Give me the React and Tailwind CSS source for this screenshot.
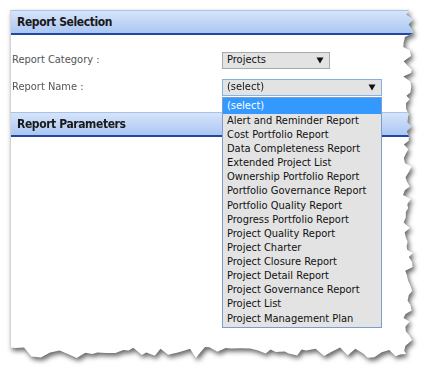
import React from "react";

function rng(seed) {
  let s = seed;
  return () => {
    s = (s * 1103515245 + 12345) % 2147483648;
    return s / 2147483648;
  };
}

function tornPolygon() {
  const r = rng(7);
  const pts = ["0px 0px"];
  let y = 0;
  pts.push("399px 0px");
  while (y < 342) {
    y += 3 + r() * 3;
    const x = 393 + r() * 10;
    pts.push(`${x.toFixed(1)}px ${Math.min(y, 344).toFixed(1)}px`);
  }
  let x = 396;
  while (x > 4) {
    x -= 4 + r() * 6;
    const yy = 337 + r() * 11;
    pts.push(`${Math.max(x, 0).toFixed(1)}px ${yy.toFixed(1)}px`);
  }
  pts.push("0px 347px");
  return `polygon(${pts.join(",")})`;
}

const items = [
  "(select)",
  "Alert and Reminder Report",
  "Cost Portfolio Report",
  "Data Completeness Report",
  "Extended Project List",
  "Ownership Portfolio Report",
  "Portfolio Governance Report",
  "Portfolio Quality Report",
  "Progress Portfolio Report",
  "Project Quality Report",
  "Project Charter",
  "Project Closure Report",
  "Project Detail Report",
  "Project Governance Report",
  "Project List",
  "Project Management Plan",
];

function Arrow() {
  return (
    <svg width="8" height="7" viewBox="0 0 8 7" className="shrink-0">
      <path d="M0.5 0.5 L7.5 0.5 L4 6.5 Z" fill="#111" />
    </svg>
  );
}

function Header({ children }) {
  return (
    <div className="h-[25px] flex items-center pl-[6px] border-t border-[#a9c2ea] border-b-2 border-b-[#2346a0] bg-[linear-gradient(#d6e4fa,#aac7f3)] text-[12px] tracking-[-0.4px] font-bold text-[#1a1a1a]">
      {children}
    </div>
  );
}

export default function App() {
  const clip = tornPolygon();
  return (
    <div
      className="w-[428px] h-[375px] bg-white pt-[10px] pl-[10px] relative overflow-hidden"
      style={{ fontFamily: '"DejaVu Sans Condensed", "DejaVu Sans", Tahoma, sans-serif' }}
    >
      <div className="[filter:drop-shadow(2px_3px_2.5px_rgba(0,0,0,0.6))]">
        <div
          className="w-[404px] h-[350px] bg-white border-l border-[#d4d4d4]"
          style={{ clipPath: clip }}
        >
          <Header>Report Selection</Header>
          <div className="pt-[17px] pb-[16px] text-[11px] text-[#555]">
            <div className="flex items-center h-[17px]">
              <div className="w-[211px] pl-[1px]">Report Category :</div>
              <div className="w-[108px] h-[17px] bg-[#e3e3e3] border border-[#a9a9a9] flex items-center justify-between pl-[4px] pr-[5px] text-[#111]">
                <span>Projects</span>
                <Arrow />
              </div>
            </div>
            <div className="flex items-center h-[17px] mt-[10px]">
              <div className="w-[211px] pl-[1px]">Report Name :</div>
              <div className="w-[160px] h-[17px] bg-[#e3e3e3] border border-[#82b2e6] flex items-center justify-between pl-[4px] pr-[5px] text-[#111]">
                <span>(select)</span>
                <Arrow />
              </div>
            </div>
          </div>
          <Header>Report Parameters</Header>
        </div>
      </div>
      <div className="absolute left-[222px] top-[97px] w-[160px] bg-[#e3e3e3] border border-[#7b9dcf] text-[11px] text-[#111] pb-[1px]">
        {items.map((it, i) => (
          <div
            key={it}
            className={
              i === 0
                ? "bg-[#3399ff] text-white pl-[4px] h-[16px] flex items-center"
                : "pl-[4px] h-[14.13px] flex items-center"
            }
          >
            {it}
          </div>
        ))}
      </div>
    </div>
  );
}
